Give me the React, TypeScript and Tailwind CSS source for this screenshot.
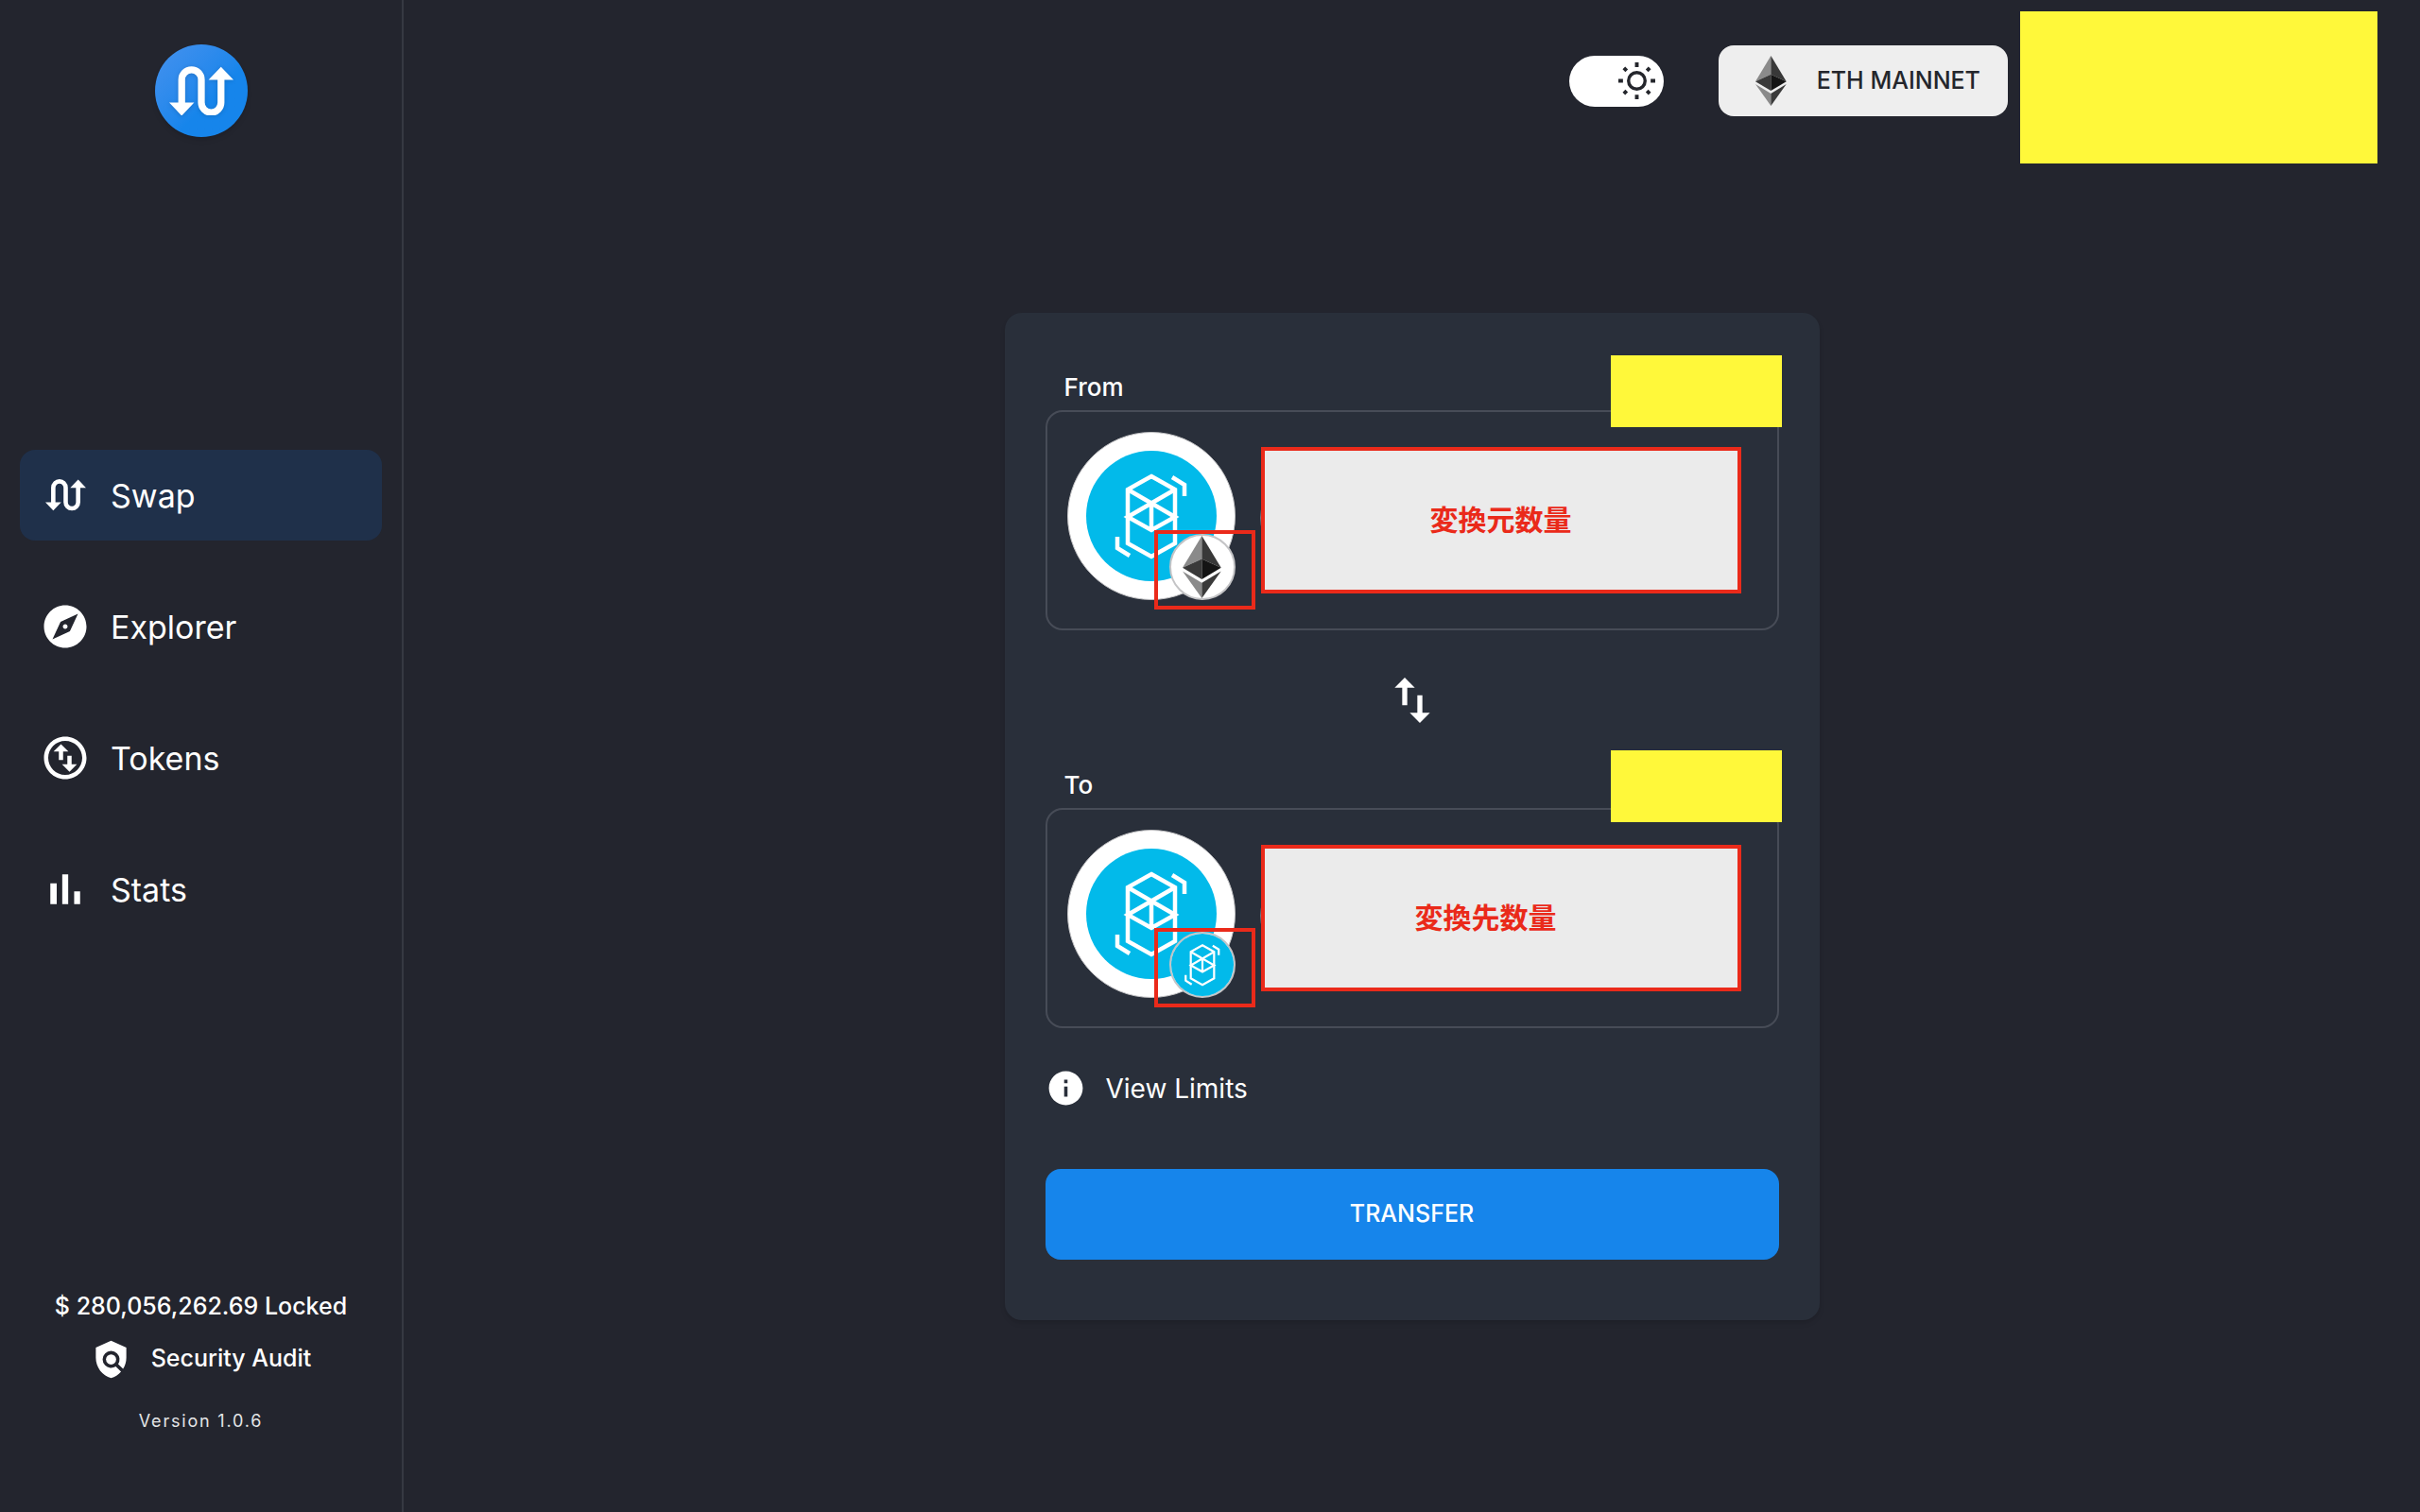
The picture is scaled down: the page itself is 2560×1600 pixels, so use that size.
import React, { useState } from 'react';
import {
  MdExplore,
  MdImportExport,
  MdInfo,
  MdOutlineSwapVerticalCircle,
  MdPolicy,
} from 'react-icons/md';

interface IconProps {
  className?: string;
}

interface SwapField {
  id: string;
  label: string;
  amount: string;
  chain: 'eth' | 'ftm';
  noteClass: string;
  inputClass: string;
}

const fields: SwapField[] = [
  { id: 'from', label: 'From', amount: '変換元数量', chain: 'eth', noteClass: '-top-[18px]', inputClass: '' },
  { id: 'to', label: 'To', amount: '変換先数量', chain: 'ftm', noteClass: '-top-[21px]', inputClass: 'pr-8' },
];

const SwapIcon: React.FC<IconProps> = ({ className }) => (
  <svg viewBox="0 0 206 160" className={className} fill="none" aria-hidden="true">
    <path
      d="M40 122V43a31.5 31.5 0 0 1 63 0v74a31.5 31.5 0 0 0 63 0V38"
      stroke="currentColor"
      strokeWidth="22"
    />
    <path d="M0 117h80l-40 42zM126 44h80l-40-42z" fill="currentColor" />
  </svg>
);

const StatsIcon: React.FC<IconProps> = ({ className }) => (
  <svg viewBox="0 0 24 24" className={className} fill="currentColor" aria-hidden="true">
    <path d="M5 9.2h3V19H5zM10.6 5h2.8v14h-2.8zm5.6 8H19v6h-2.8z" />
  </svg>
);

const EthIcon: React.FC<IconProps> = ({ className }) => (
  <svg viewBox="0 0 100 162" className={className} aria-hidden="true">
    <path d="M50 0 0 83l50-23z" fill="#8a8a8a" />
    <path d="M50 0l50 83-50-23z" fill="#383838" />
    <path d="M0 83l50-23v53z" fill="#393939" />
    <path d="M100 83L50 60v53z" fill="#141414" />
    <path d="M0 92l50 30v40z" fill="#8a8a8a" />
    <path d="M100 92l-50 30v40z" fill="#3a3a3a" />
  </svg>
);

const FantomIcon: React.FC<IconProps> = ({ className }) => (
  <svg viewBox="0 0 138 138" className={className} aria-hidden="true">
    <circle cx="69" cy="69" r="69" fill="#02baea" />
    <g fill="none" stroke="#fff" strokeWidth="4.5">
      <path d="M69 27l25 14v57L69 112 44 98V41z" />
      <path d="M44 41l50 29-25 14-25-14 50-29M69 55v29" />
      <path d="M91 28l13 8v12M46 111l-13-8V91" />
    </g>
  </svg>
);

const SunIcon: React.FC<IconProps> = ({ className }) => (
  <svg viewBox="0 0 40 40" className={className} fill="none" stroke="#24262c" aria-hidden="true">
    <circle cx="20" cy="20" r="9" strokeWidth="3.5" />
    <path
      d="M20 0v5M20 35v5M0 20h5M35 20h5M6 6l3 3M31 31l3 3M6 34l3-3M31 9l3-3"
      strokeWidth="4"
    />
  </svg>
);

const navItems = [
  { label: 'Swap', icon: <SwapIcon className="w-[43px]" />, active: true },
  { label: 'Explorer', icon: <MdExplore className="size-[54px]" /> },
  { label: 'Tokens', icon: <MdOutlineSwapVerticalCircle className="size-[54px]" /> },
  { label: 'Stats', icon: <StatsIcon className="size-[54px]" /> },
];

const Sidebar: React.FC = () => (
  <aside className="flex w-[427px] shrink-0 flex-col border-r-2 border-[#363942] px-[21px] pt-[47px] pb-[84px]">
    <a
      href="#home"
      aria-label="Home"
      className="flex size-[98px] items-center justify-center self-center rounded-full bg-linear-to-br from-[#4492ee] to-[#1685eb] to-60% shadow-md"
    >
      <SwapIcon className="w-[68px] drop-shadow-sm" />
    </a>

    <nav className="mt-[331px] flex flex-col gap-[43px]">
      {navItems.map((item) => (
        <a
          key={item.label}
          href={`#${item.label.toLowerCase()}`}
          className={`flex h-24 items-center gap-[21px] rounded-2xl px-[21px] text-[34px] font-normal ${
            item.active ? 'bg-[#1f304a]' : ''
          }`}
        >
          <span className="flex w-[54px] justify-center">{item.icon}</span>
          {item.label}
        </a>
      ))}
    </nav>

    <div className="mt-auto flex flex-col items-center">
      <p className="text-[25px] leading-8 font-medium">$ 280,056,262.69 Locked</p>
      <a href="#audit" className="mt-[14px] flex h-[52px] items-center gap-[21px] text-[25px] font-medium">
        <MdPolicy className="size-[43px]" />
        Security Audit
      </a>
      <p className="mt-7 text-lg leading-6 tracking-widest text-[#e4e5e7]">Version 1.0.6</p>
    </div>
  </aside>
);

const Header: React.FC = () => {
  const [light, setLight] = useState(true);

  return (
    <header className="flex items-start justify-end pt-3 pr-[45px]">
      <div className="flex h-[147px] items-center">
        <button
          type="button"
          role="switch"
          aria-checked={light}
          aria-label="Theme"
          onClick={() => setLight(!light)}
          className={`flex h-[54px] w-[100px] items-center rounded-full bg-white px-[9px] ${
            light ? 'justify-end' : 'justify-start'
          }`}
        >
          <SunIcon className="size-[39px]" />
        </button>
        <button
          type="button"
          className="mr-[13px] ml-[58px] flex h-[75px] w-[306px] items-center rounded-2xl bg-[#eeeeee] pl-[39px] text-[25px] font-medium text-[#24262c]"
        >
          <EthIcon className="mr-8 h-[53px]" />
          ETH MAINNET
        </button>
      </div>
      {/* Account area, masked */}
      <div className="h-[161px] w-[378px] bg-[#fff83a]" />
    </header>
  );
};

const TokenField: React.FC<{ field: SwapField }> = ({ field }) => (
  <div className="relative">
    <label htmlFor={field.id} className="block pb-2 pl-5 text-[26px] leading-8 font-medium">
      {field.label}
    </label>
    <div className="flex h-[233px] items-center gap-[27px] rounded-[18px] border-2 border-[#474c57] pr-[38px] pl-[21px]">
      <button
        type="button"
        aria-label="Select token"
        className="relative mb-[10px] flex size-[178px] shrink-0 items-center justify-center rounded-full border border-[#c4c4c6] bg-white"
      >
        <FantomIcon className="size-[138px]" />
        <span className="absolute -right-px -bottom-px flex size-[70px] items-center justify-center overflow-hidden rounded-full border-2 border-[#c4c4c6] bg-white">
          {field.chain === 'eth' ? (
            <EthIcon className="h-[66px]" />
          ) : (
            <FantomIcon className="size-[68px] shrink-0" />
          )}
        </span>
        <span className="absolute -right-[22px] -bottom-[11px] h-[84px] w-[107px] border-4 border-[#ea2a1a]" />
      </button>
      <div className="relative flex min-w-0 flex-1">
        {/* Rounded edge that peeks out behind the amount box */}
        <span className="absolute top-9 -left-px size-[78px] rounded-full border-2 border-[#777a82]" />
        <input
          id={field.id}
          defaultValue={field.amount}
          className={`relative h-[155px] min-w-0 flex-1 border-4 border-[#ea2a1a] bg-[#ebebeb] pb-[6px] text-center text-[30px] font-bold text-[#ea2a1a] outline-none ${field.inputClass}`}
        />
      </div>
    </div>
    <div className={`absolute -right-[3px] h-[76px] w-[181px] bg-[#fff83a] ${field.noteClass}`} />
  </div>
);

const SwapCard: React.FC = () => (
  <section className="w-[862px] rounded-[18px] bg-[#292f3a] px-[43px] pt-[63px] pb-16 shadow-md">
    <TokenField field={fields[0]} />
    <div className="flex h-[148px] items-center justify-center">
      <button type="button" aria-label="Switch direction">
        <MdImportExport className="size-16" />
      </button>
    </div>
    <TokenField field={fields[1]} />
    <button type="button" className="mt-[42px] flex h-[43px] items-center gap-[21px] text-[28px] font-normal">
      <MdInfo className="size-[43px]" />
      View Limits
    </button>
    <button
      type="button"
      className="mt-16 h-24 w-full rounded-2xl bg-[#1685eb] text-[25px] font-medium"
    >
      TRANSFER
    </button>
  </section>
);

const App: React.FC = () => (
  <div className="flex min-h-screen bg-[#23252e] font-['Inter','Noto_Sans_CJK_JP',sans-serif] text-white">
    <Sidebar />
    <div className="flex min-w-0 flex-1 flex-col">
      <Header />
      <main className="flex justify-center pt-[158px]">
        <SwapCard />
      </main>
    </div>
  </div>
);

export default App;
